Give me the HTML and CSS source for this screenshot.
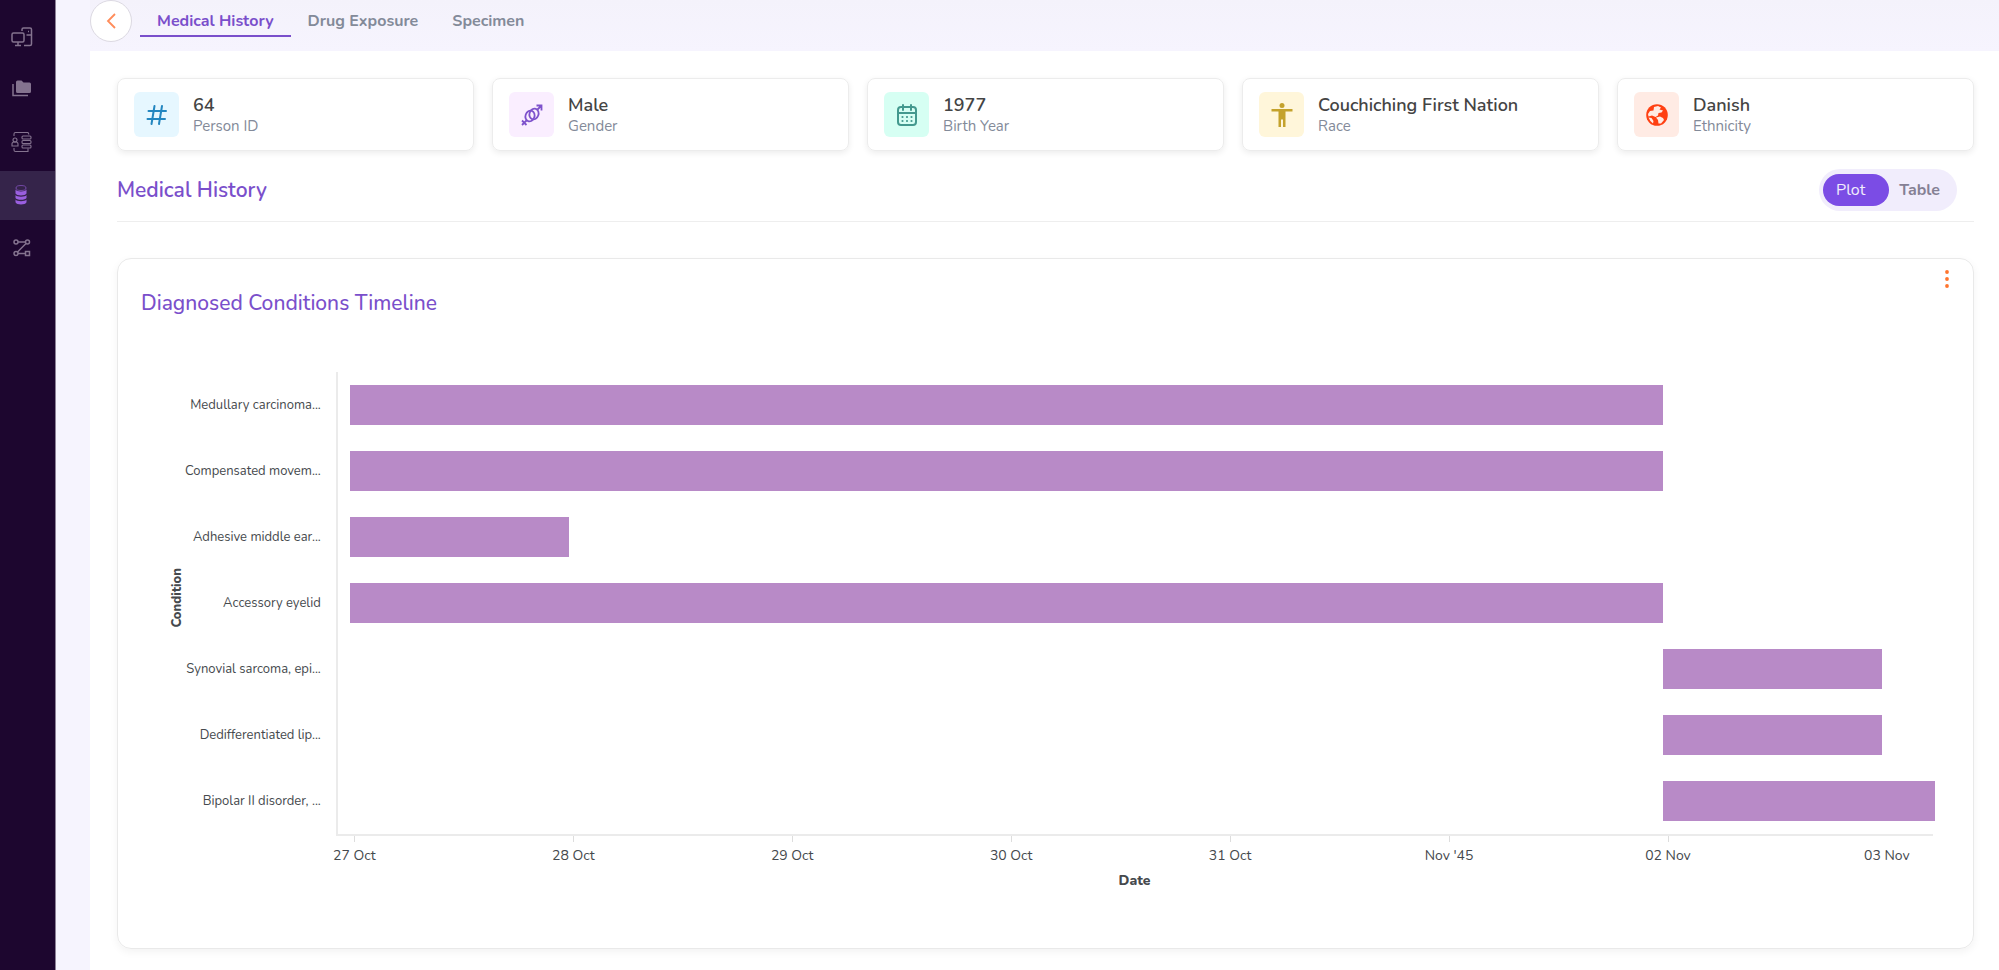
FILE: index.html
```html
<!DOCTYPE html>
<html lang="en">

<head>
    <meta charset="UTF-8">
    <meta name="viewport" content="width=device-width, initial-scale=1">
    <title>Medical History</title>
    <link rel="stylesheet" href="styles.css">
</head>

<body>
    <nav class="sidebar" aria-label="Main">
        <a href="#" class="side-link" aria-label="Workspace">
            <svg width="22" height="22" viewBox="0 0 22 22" fill="none" stroke="currentColor" stroke-width="1.500">
                <rect x="1" y="8" width="12" height="9" rx="1.500" />
                <path d="M7 17v3M4 20.500h6M11 6V4.500A1.500 1.500 0 0 1 12.500 3H19a1.500 1.500 0 0 1 1.500 1.500V19a1.500 1.500 0 0 1-1.500 1.500h-6M15.500 10h5M17 6.500h1" />
            </svg>
        </a>
        <a href="#" class="side-link" aria-label="Projects">
            <svg width="22" height="22" viewBox="0 0 22 22" fill="currentColor">
                <path d="M5 4a1.500 1.500 0 0 1 1.500-1.500h4l2 2h6A1.500 1.500 0 0 1 20 6v7.500a1.500 1.500 0 0 1-1.500 1.500h-12A1.500 1.500 0 0 1 5 13.500z" />
                <path d="M2 6v11.500h15" fill="none" stroke="currentColor" stroke-width="1.500" />
            </svg>
        </a>
        <a href="#" class="side-link" aria-label="Patient data">
            <svg width="22" height="22" viewBox="0 0 22 22" fill="none" stroke="currentColor" stroke-width="1.100">
                <circle cx="4" cy="9" r="2" />
                <path d="M1 15v-2a2 2 0 0 1 2-2h2a2 2 0 0 1 2 2v2zM3 5V3q0-1.500 1.500-1.500H17l1 2M3 17v2q0 1.500 1.500 1.500H17v-3" />
                <rect x="11" y="5" width="9" height="3" rx="1" />
                <rect x="11" y="9.500" width="9" height="3" rx="1" />
                <rect x="11" y="14" width="9" height="3" rx="1" />
            </svg>
        </a>
        <a href="#" class="side-link active" aria-label="Database">
            <svg width="22" height="22" viewBox="0 0 22 22" fill="currentColor">
                <ellipse cx="10" cy="4" rx="5" ry="2.500" fill="none" stroke="currentColor" opacity="0.600" />
                <path d="M4.500 5.500c1 2.600 10 2.600 11 0v4c-1 2.500-10 2.500-11 0zM4.500 11c1 2.200 10 2.200 11 0v3c-1 2.400-10 2.400-11 0zM4.500 15.600c1 2.200 10 2.200 11 0v2.600c-1 3-10 3-11 0z" />
            </svg>
        </a>
        <a href="#" class="side-link" aria-label="Workflow">
            <svg width="22" height="22" viewBox="0 0 22 22" fill="none" stroke="currentColor" stroke-width="1.500">
                <circle cx="5" cy="5" r="2" />
                <circle cx="16.500" cy="5" r="2" />
                <circle cx="5" cy="16.500" r="2" />
                <path d="M14.500 14.500h4v4h-4zM7 5h7.500M15 6.500l-8.500 8.500M7 16.500h7.500" />
            </svg>
        </a>
    </nav>

    <div class="page">
        <header class="topbar">
            <button type="button" class="back" aria-label="Back">
                <svg width="10" height="18" viewBox="0 0 10 18" fill="none" stroke="currentColor" stroke-width="1.800">
                    <path d="M9 2L2 9l7 7" />
                </svg>
            </button>
            <nav class="tabs" aria-label="Records">
                <a href="#" class="tab active">Medical History</a>
                <a href="#" class="tab">Drug Exposure</a>
                <a href="#" class="tab">Specimen</a>
            </nav>
        </header>

        <main class="content">
            <section class="facts">
                <div class="fact">
                    <span class="fact-icon blue">
                        <svg width="22" height="22" viewBox="0 0 22 22" fill="none" stroke="currentColor" stroke-width="2" stroke-linecap="round">
                            <path d="M8.500 2l-3 18M16 2l-3 18M2.500 7H20M1.500 15H19" />
                        </svg>
                    </span>
                    <div>
                        <div class="fact-value">64</div>
                        <div class="fact-label">Person ID</div>
                    </div>
                </div>
                <div class="fact">
                    <span class="fact-icon purple">
                        <svg width="22" height="22" viewBox="0 0 22 22" fill="none" stroke="currentColor" stroke-width="1.800">
                            <ellipse cx="9" cy="12" rx="4.500" ry="5.500" transform="rotate(20 9 12)" />
                            <ellipse cx="13" cy="10" rx="4.500" ry="5.500" transform="rotate(20 13 10)" />
                            <path d="M16.500 5.500L20.500 1.500M15.500 1.500h5v5M5.500 16.500L1 21M1 16.500L5.500 21" />
                        </svg>
                    </span>
                    <div>
                        <div class="fact-value">Male</div>
                        <div class="fact-label">Gender</div>
                    </div>
                </div>
                <div class="fact">
                    <span class="fact-icon green">
                        <svg width="22" height="22" viewBox="0 0 22 22" fill="none" stroke="currentColor" stroke-width="2" stroke-linecap="round">
                            <rect x="2" y="3" width="18" height="18" rx="3" />
                            <path d="M2 9h18M7 1v5M15 1v5" />
                            <path d="M6.500 13h0M11 13h0M15.500 13h0M6.500 17h0M11 17h0M15.500 17h0" stroke-width="2.200" />
                        </svg>
                    </span>
                    <div>
                        <div class="fact-value">1977</div>
                        <div class="fact-label">Birth Year</div>
                    </div>
                </div>
                <div class="fact">
                    <span class="fact-icon yellow">
                        <svg width="24" height="24" viewBox="0 0 24 24" fill="currentColor">
                            <circle cx="12" cy="2.500" r="2.500" />
                            <path d="M1.500 6h21v2.500h-7V24H13v-7.500h-2V24H8.500V8.500h-7z" />
                        </svg>
                    </span>
                    <div>
                        <div class="fact-value">Couchiching First Nation</div>
                        <div class="fact-label">Race</div>
                    </div>
                </div>
                <div class="fact">
                    <span class="fact-icon red">
                        <svg width="22" height="22" viewBox="0 0 22 22">
                            <circle cx="11" cy="11" r="10.800" fill="currentColor" />
                            <path d="M8 3l4-1 3 1.500-1.500 2L17 6.500 15.500 8.500 12.500 9 12 11.500 9.500 13 6 11.500l-3.500 1L2 10l2-3 3.500-.5zM10 13.500l4-1 3 1.500 1 2-3 3.500h-2.500l-.5-3.500zM2.500 13.500l3 .5L7.500 17 7 19.500Q4 17.500 2.500 13.500z" fill="#ffebe4" />
                        </svg>
                    </span>
                    <div>
                        <div class="fact-value">Danish</div>
                        <div class="fact-label">Ethnicity</div>
                    </div>
                </div>
            </section>

            <div class="section-head">
                <h1>Medical History</h1>
                <div class="toggle" role="group" aria-label="View">
                    <button type="button" class="toggle-btn on" aria-pressed="true">Plot</button>
                    <button type="button" class="toggle-btn" aria-pressed="false">Table</button>
                </div>
            </div>

            <section class="chart-card">
                <div class="chart-head">
                    <h2>Diagnosed Conditions Timeline</h2>
                    <button type="button" class="more" aria-label="Chart menu">
                        <svg width="6" height="20" viewBox="0 0 6 20" fill="currentColor">
                            <circle cx="3" cy="3" r="1.900" />
                            <circle cx="3" cy="10" r="1.900" />
                            <circle cx="3" cy="17" r="1.900" />
                        </svg>
                    </button>
                </div>

                <div class="chart">
                    <div class="y-title">Condition</div>
                    <div class="y-labels">
                        <span>Medullary carcinoma...</span>
                        <span>Compensated movem...</span>
                        <span>Adhesive middle ear...</span>
                        <span>Accessory eyelid</span>
                        <span>Synovial sarcoma, epi...</span>
                        <span>Dedifferentiated lip...</span>
                        <span>Bipolar II disorder, ...</span>
                    </div>
                    <div class="plot">
                        <div class="row"><div class="bar" style="margin-left: 0.75%; width: 82.3%"></div></div>
                        <div class="row"><div class="bar" style="margin-left: 0.75%; width: 82.3%"></div></div>
                        <div class="row"><div class="bar" style="margin-left: 0.75%; width: 13.73%"></div></div>
                        <div class="row"><div class="bar" style="margin-left: 0.75%; width: 82.3%"></div></div>
                        <div class="row"><div class="bar" style="margin-left: 83.05%; width: 13.73%"></div></div>
                        <div class="row"><div class="bar" style="margin-left: 83.05%; width: 13.73%"></div></div>
                        <div class="row"><div class="bar" style="margin-left: 83.05%; width: 17.05%"></div></div>
                    </div>
                    <div class="x-axis">
                        <div class="tick"><span>27 Oct</span></div>
                        <div class="tick"><span>28 Oct</span></div>
                        <div class="tick"><span>29 Oct</span></div>
                        <div class="tick"><span>30 Oct</span></div>
                        <div class="tick"><span>31 Oct</span></div>
                        <div class="tick"><span>Nov '45</span></div>
                        <div class="tick"><span>02 Nov</span></div>
                        <div class="tick last"><span>03 Nov</span></div>
                    </div>
                    <div class="x-title">Date</div>
                </div>
            </section>
        </main>
    </div>
</body>

</html>
```
FILE: styles.css
```css
* {
    box-sizing: border-box;
}

body {
    margin: 0;
    display: flex;
    min-height: 100vh;
    background: #f6f4fe;
    color: #444;
    font-family: Nunito, "Open Sans", "Noto Sans", sans-serif;
}

h1,
h2 {
    margin: 0;
    color: #7a4fcb;
}

a {
    text-decoration: none;
}

button {
    font-family: inherit;
    border: none;
    cursor: pointer;
}

svg {
    display: block;
}

/* sidebar */
.sidebar {
    flex: 0 0 56px;
    background: #1d062f;
    border-right: 1px solid #8d8298;
    padding-top: 12px;
    display: flex;
    flex-direction: column;
    gap: 4px;
}

.side-link {
    display: flex;
    align-items: center;
    height: 49px;
    padding: 0 0 2px 11px;
    color: #84738f;
}

.side-link.active {
    background: #35244a;
    color: #9a5fe0;
}

/* top bar */
.page {
    flex: 1;
    min-width: 0;
    padding-left: 34px;
    display: flex;
    flex-direction: column;
}

.topbar {
    display: flex;
    gap: 8px;
    height: 51px;
    background: linear-gradient(#f4f2fb, #f6f4fe);
}

.back {
    width: 42px;
    height: 42px;
    display: flex;
    align-items: center;
    justify-content: center;
    background: #fff;
    border: 1px solid #dcd9e2;
    border-radius: 50%;
    color: #ff8c5a;
}

.tabs {
    display: flex;
}

.tab {
    height: 37px;
    padding: 10px 17px 0;
    font-size: 16px;
    line-height: 22px;
    font-weight: 700;
    color: #838a99;
}

.tab.active {
    border-bottom: 2px solid #7a4fcb;
    color: #7a4fcb;
}

/* content */
.content {
    flex: 1;
    background: #fff;
    padding: 27px 25px 20px 27px;
}

.facts {
    display: grid;
    grid-template-columns: repeat(5, 1fr);
    gap: 18px;
}

.fact {
    display: flex;
    align-items: center;
    gap: 14px;
    height: 73px;
    padding: 0 16px;
    border: 1px solid #ececec;
    border-radius: 8px;
    box-shadow: 0 2px 6px rgba(0, 0, 0, 0.08);
}

.fact-icon {
    display: flex;
    align-items: center;
    justify-content: center;
    width: 45px;
    height: 45px;
    border-radius: 6px;
}

.blue {
    background: #e6f7ff;
    color: #2386c0;
}

.purple {
    background: #faeeff;
    color: #7e52cc;
}

.green {
    background: #d6fff3;
    color: #43998e;
}

.yellow {
    background: #fff6da;
    color: #c4a22c;
}

.red {
    background: #ffebe4;
    color: #ff4012;
}

.fact-value {
    font-size: 18px;
    line-height: 22px;
    font-weight: 600;
    color: #444;
}

.fact-label {
    font-size: 15px;
    line-height: 20px;
    color: #838a99;
}

.section-head {
    display: flex;
    justify-content: space-between;
    align-items: center;
    height: 71px;
    padding: 8px 17px 0 0;
    border-bottom: 1px solid #eee;
}

.section-head h1 {
    font-size: 21px;
    line-height: 28px;
    font-weight: 600;
}

.toggle {
    display: flex;
    padding: 5px 4px;
    border-radius: 21px;
    background: #f1edfc;
}

.toggle-btn {
    height: 32px;
    padding: 0 13px 0 10px;
    border-radius: 16px;
    background: none;
    font-size: 16px;
    font-weight: 700;
    color: #858094;
}

.toggle-btn.on {
    padding: 0 24px 0 13px;
    background: #7b4ce5;
    color: #f1edfc;
    font-weight: 400;
}

/* chart */
.chart-card {
    margin-top: 36px;
    padding: 0 23px 58px;
    border: 1px solid #e9e9e9;
    border-radius: 14px;
    box-shadow: 0 3px 8px rgba(0, 0, 0, 0.05);
}

.chart-head {
    display: flex;
    justify-content: space-between;
    height: 113px;
}

.chart-head h2 {
    padding-top: 30px;
    font-size: 21px;
    line-height: 28px;
    font-weight: 500;
}

.more {
    align-self: flex-start;
    margin-top: 10px;
    padding: 0;
    background: none;
    color: #ff752e;
}

.chart {
    display: grid;
    grid-template-columns: 44px 151px 1fr;
    padding-right: 17px;
    color: #45494d;
}

.y-title {
    align-self: center;
    justify-self: end;
    margin-bottom: 12px;
    writing-mode: vertical-rl;
    transform: rotate(180deg);
    font-size: 13px;
    line-height: 16px;
    font-weight: 800;
}

.y-labels {
    display: grid;
    grid-auto-rows: 66px;
    align-items: center;
    padding-right: 18px;
    text-align: right;
    font-size: 13px;
    line-height: 16px;
    white-space: nowrap;
}

.plot {
    border-left: 2px solid #ebebeb;
    border-bottom: 2px solid #ebebeb;
}

.row {
    display: flex;
    align-items: center;
    height: 66px;
}

.bar {
    flex: none;
    height: 40px;
    background: #b88ac7;
}

.x-axis {
    grid-column: 3;
    display: flex;
    font-size: 14px;
    line-height: 18px;
}

.tick {
    flex: 0 0 13.71%;
}

.tick:first-child {
    margin-left: 1.15%;
}

.tick::before {
    content: "";
    display: block;
    width: 1px;
    height: 6px;
    background: #ddd;
}

.tick.last {
    flex-basis: 0;
}

.tick.last::before {
    background: none;
}

.tick span {
    display: block;
    width: max-content;
    margin-top: 5px;
    transform: translateX(-50%);
}

.x-title {
    grid-column: 3;
    margin-top: 7px;
    text-align: center;
    font-size: 14px;
    line-height: 18px;
    font-weight: 800;
}
```
